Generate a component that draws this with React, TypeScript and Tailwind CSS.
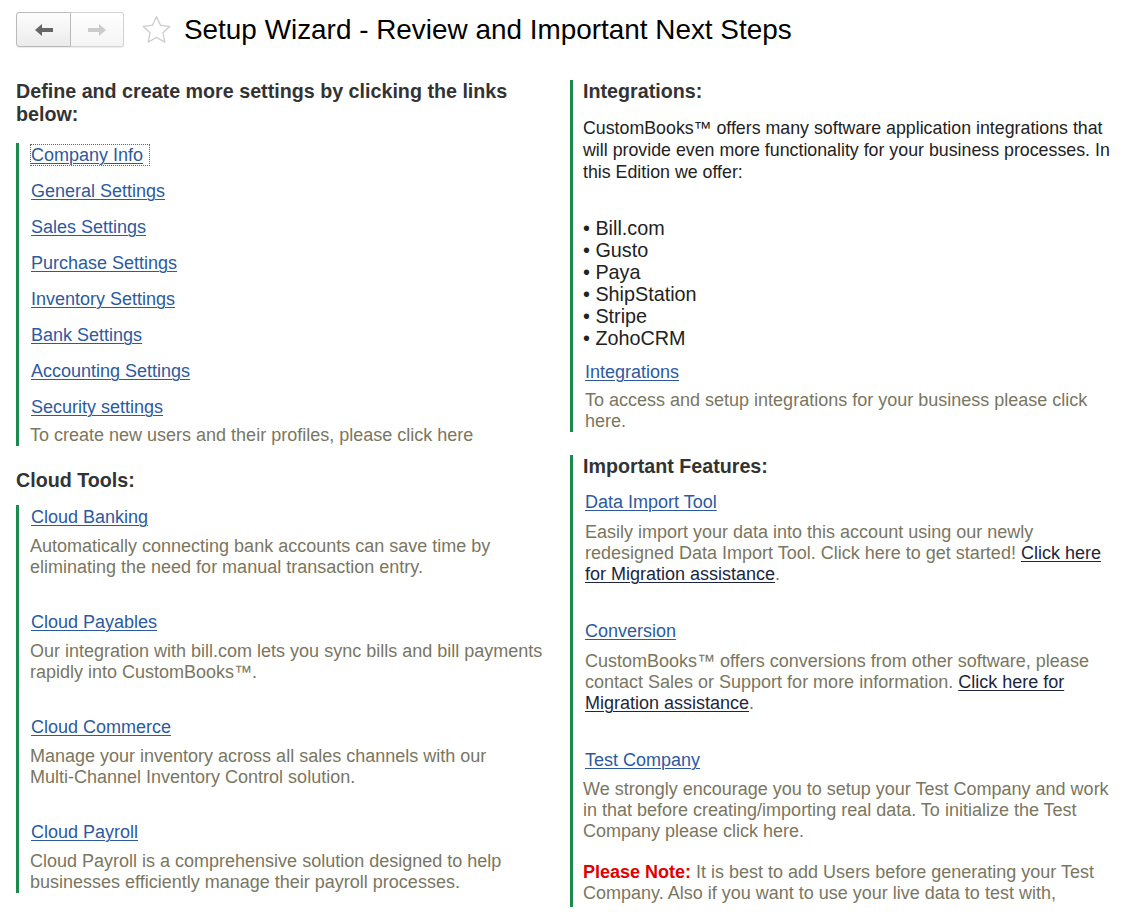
import React from 'react'

const SETTINGS = [
  'Company Info',
  'General Settings',
  'Sales Settings',
  'Purchase Settings',
  'Inventory Settings',
  'Bank Settings',
  'Accounting Settings',
  'Security settings',
]

const CLOUD_TOOLS = [
  {
    label: 'Cloud Banking',
    text: 'Automatically connecting bank accounts can save time by eliminating the need for manual transaction entry.',
  },
  {
    label: 'Cloud Payables',
    text: 'Our integration with bill.com lets you sync bills and bill payments rapidly into CustomBooks™.',
  },
  {
    label: 'Cloud Commerce',
    text: 'Manage your inventory across all sales channels with our Multi\u2011Channel Inventory Control solution.',
  },
  {
    label: 'Cloud Payroll',
    text: 'Cloud Payroll is a comprehensive solution designed to help businesses efficiently manage their payroll processes.',
  },
]

const INTEGRATIONS = ['Bill.com', 'Gusto', 'Paya', 'ShipStation', 'Stripe', 'ZohoCRM']

const heading = 'text-[19.7px] font-bold leading-[23px] text-[#333]'
const link = 'text-[#2c5aa0] underline underline-offset-2 decoration-1'
const gray = 'text-[18px] leading-[21px] text-[#7a765f]'
const navy = 'text-[#1c2640] underline underline-offset-2 decoration-1'

function Arrow({ dir, color }: { dir: 'left' | 'right'; color: string }) {
  return (
    <svg width="18" height="12" viewBox="0 0 18 12" className={dir === 'right' ? 'scale-x-[-1]' : ''}>
      <polygon points="0,6 7,0 7,4 18,4 18,8 7,8 7,12" fill={color} />
    </svg>
  )
}

function Star() {
  return (
    <svg width="31" height="30" viewBox="0 0 24 23">
      <path
        d="M12 1.2l3.1 6.6 7.2.9-5.3 5 1.4 7.1L12 17.3l-6.4 3.5 1.4-7.1-5.3-5 7.2-.9z"
        fill="none"
        stroke="#cfcfcf"
        strokeWidth="1.1"
        strokeLinejoin="round"
      />
    </svg>
  )
}

export default function App() {
  return (
    <div className="min-h-[917px] bg-white px-[16px] pt-[12px] font-['Liberation_Sans',Arial,sans-serif]">
      {/* Header */}
      <div className="flex h-[35px] items-center">
        <div className="flex h-[35px] rounded-[3px] shadow-[0_1px_1px_rgba(0,0,0,0.08)]">
          <button className="flex w-[55px] items-center justify-center rounded-l-[3px] border border-[#b9b9b9] bg-gradient-to-b from-[#fdfdfd] to-[#ebebeb]">
            <Arrow dir="left" color="#666" />
          </button>
          <button className="flex w-[53px] items-center justify-center rounded-r-[3px] border border-l-0 border-[#d3d3d3] bg-gradient-to-b from-[#ffffff] to-[#f4f4f4]">
            <Arrow dir="right" color="#cbcbcb" />
          </button>
        </div>
        <div className="ml-[17px] flex items-center">
          <Star />
        </div>
        <h1 className="ml-[12px] text-[27.9px] leading-[32px] text-black">
          Setup Wizard - Review and Important Next Steps
        </h1>
      </div>

      {/* Body */}
      <div className="mt-[33px] flex gap-[18px]">
        {/* Left column */}
        <div className="w-[536px] shrink-0">
          <h2 className={heading}>Define and create more settings by clicking the links below:</h2>
          <div className="mt-[17px] border-l-[3px] border-[#1b8a4c] pl-[12px]">
            <div className="flex flex-col gap-[12px]">
              {SETTINGS.map((s, i) => (
                <div key={s} className="h-[24px] text-[18px] leading-[24px]">
                  <a
                    href="#"
                    className={i === 0 ? `${link} pr-[6px] outline-1 outline-dotted outline-[#666]` : link}
                  >
                    {s}
                  </a>
                </div>
              ))}
            </div>
            <p className={`${gray} -ml-px mt-[5.5px]`}>To create new users and their profiles, please click here</p>
          </div>

          <h2 className={`${heading} mt-[23.5px]`}>Cloud Tools:</h2>
          <div className="mt-[13px] border-l-[3px] border-[#1b8a4c] pl-[12px]">
            {CLOUD_TOOLS.map((t, i) => (
              <div key={t.label} className={i === 0 ? '' : 'mt-[32.5px]'}>
                <div className="h-[24px] text-[18px] leading-[24px]">
                  <a href="#" className={link}>{t.label}</a>
                </div>
                <p className={`${gray} -ml-px mt-[6.5px]`}>{t.text}</p>
              </div>
            ))}
          </div>
        </div>

        {/* Right column */}
        <div className="w-[552px] shrink-0">
          <div className="border-l-[3px] border-[#1b8a4c] pl-[10px]">
            <h2 className={heading}>Integrations:</h2>
            <p className="mt-[13.5px] text-[17.8px] leading-[22px] text-[#222]">
              CustomBooks™ offers many software application integrations that will provide even more functionality
              for your business processes. In this Edition we offer:
            </p>
            <ul className="mt-[34px] text-[19.8px] leading-[22px] text-[#222]">
              {INTEGRATIONS.map(n => (
                <li key={n}>• {n}</li>
              ))}
            </ul>
            <div className="ml-[2px] mt-[11px] h-[24px] text-[18px] leading-[24px]">
              <a href="#" className={link}>Integrations</a>
            </div>
            <p className={`${gray} ml-[2px] mt-[6.5px]`}>
              To access and setup integrations for your business please click here.
            </p>
          </div>

          <div className="mt-[22.5px] border-l-[3px] border-[#1b8a4c] pb-[3px] pl-[10px]">
            <h2 className={heading}>Important Features:</h2>

            <div className="ml-[2px] mt-[12.5px] h-[24px] text-[18px] leading-[24px]">
              <a href="#" className={link}>Data Import Tool</a>
            </div>
            <p className={`${gray} ml-[2px] mt-[7.5px]`}>
              Easily import your data into this account using our newly redesigned Data Import Tool. Click here to
              get started! <a href="#" className={navy}>Click here for Migration assistance</a>.
            </p>

            <div className="ml-[2px] mt-[34.5px] h-[24px] text-[18px] leading-[24px]">
              <a href="#" className={link}>Conversion</a>
            </div>
            <p className={`${gray} ml-[2px] mt-[7.5px]`}>
              CustomBooks™ offers conversions from other software, please contact Sales or Support for more
              information. <a href="#" className={navy}>Click here for Migration assistance</a>.
            </p>

            <div className="ml-[2px] mt-[34.5px] h-[24px] text-[18px] leading-[24px]">
              <a href="#" className={link}>Test Company</a>
            </div>
            <p className={`${gray} mt-[6.5px]`}>
              We strongly encourage you to setup your Test Company and work in that before creating/importing real
              data. To initialize the Test Company please click here.
            </p>
            <p className={`${gray} mt-[20px]`}>
              <span className="font-bold text-[#e10000]">Please Note:</span> It is best to add Users before
              generating your Test Company. Also if you want to use your live data to test with,
            </p>
          </div>
        </div>
      </div>
    </div>
  )
}
